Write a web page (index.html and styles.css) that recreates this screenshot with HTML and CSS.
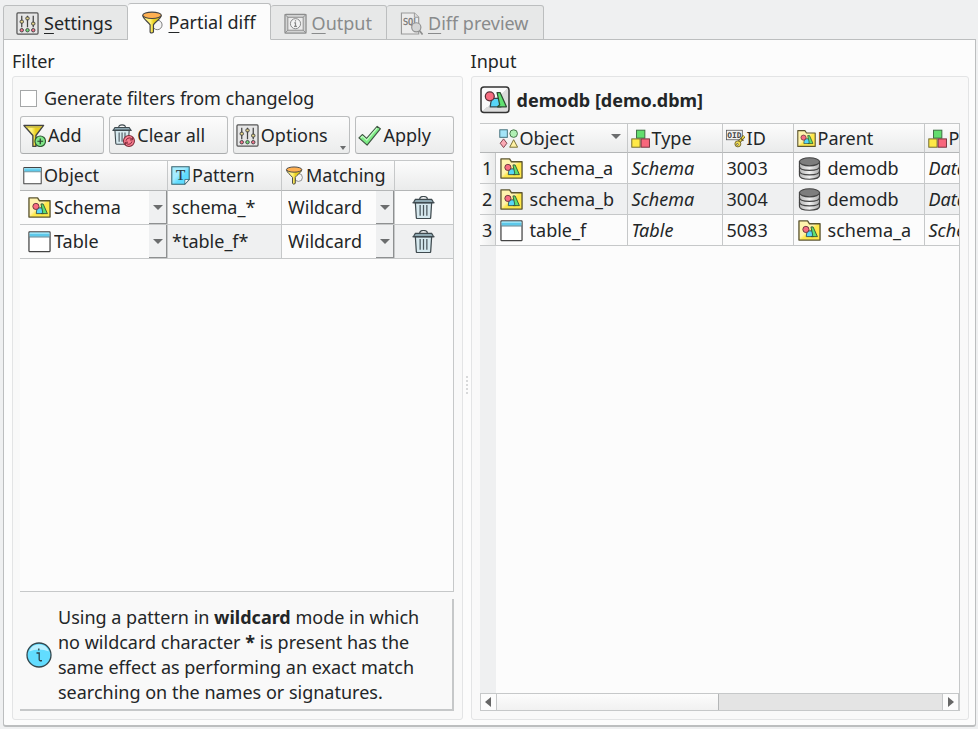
FILE: index.html
```html
<!DOCTYPE html>
<html lang="en">
<head>
    <meta charset="UTF-8">
    <meta name="viewport" content="width=device-width, initial-scale=1.0">
    <title>Partial diff</title>
    <link rel="stylesheet" href="styles.css">
</head>
<body>
    <!-- Icon set -->
    <svg class="icon-defs" width="0" height="0" aria-hidden="true">
        <defs>
            <linearGradient id="g-folder" x1="0" y1="0" x2="1" y2="1">
                <stop offset="0.45" stop-color="#fff3ad"/>
                <stop offset="0.55" stop-color="#ffe84a"/>
            </linearGradient>
            <linearGradient id="g-funnel" x1="0" x2="1">
                <stop offset="0.4" stop-color="#fff27a"/>
                <stop offset="0.6" stop-color="#e9cf1e"/>
            </linearGradient>
            <linearGradient id="g-disk" x1="0" x2="1">
                <stop offset="0" stop-color="#b5b5b5"/>
                <stop offset="0.5" stop-color="#f2f2f2"/>
                <stop offset="1" stop-color="#a8a8a8"/>
            </linearGradient>
            <linearGradient id="g-text" x1="0" y1="0" x2="1" y2="1">
                <stop offset="0.4" stop-color="#a5ecff"/>
                <stop offset="0.6" stop-color="#5fdcff"/>
            </linearGradient>
            <linearGradient id="g-model" x1="0" y1="0" x2="1" y2="1">
                <stop offset="0.5" stop-color="#fafafa"/>
                <stop offset="0.5" stop-color="#dcdcdc"/>
            </linearGradient>
        </defs>
        <symbol id="i-settings" viewBox="0 0 24 24">
            <rect x="1" y="1" width="22" height="22" rx="1" fill="#e6e6e6" stroke="#555" stroke-width="1.3"/>
            <path d="M6 4v12M12 4v12M18 4v12" stroke="#444" stroke-width="1.3"/>
            <g fill="#e9d98a" stroke="#444" stroke-width="1">
                <rect x="4.3" y="8.6" width="3.4" height="3" rx="1"/>
                <rect x="10.3" y="5.2" width="3.4" height="3" rx="1"/>
                <rect x="16.3" y="10.6" width="3.4" height="3" rx="1"/>
            </g>
            <g stroke="#444" stroke-width="1">
                <circle cx="6" cy="19" r="1.8" fill="#f2738c"/>
                <circle cx="12" cy="19" r="1.8" fill="#6fdc7a"/>
                <circle cx="18" cy="19" r="1.8" fill="#f2738c"/>
            </g>
        </symbol>
        <symbol id="i-filter" viewBox="0 0 24 24">
            <circle cx="17" cy="14.5" r="5" fill="#f4f4f4" stroke="#777" stroke-width="1"/>
            <path d="M2 5c0 3 5 6 7.5 9.500V22q1.500 2 3.500 0v-7.500C15 11 21 8 21 5z" fill="url(#g-funnel)" stroke="#444" stroke-width="1.2"/>
            <ellipse cx="11.5" cy="4.5" rx="9.7" ry="3.3" fill="#ffb052" stroke="#444" stroke-width="1.2"/>
        </symbol>
        <symbol id="i-output" viewBox="0 0 24 24">
            <rect x="1" y="2.5" width="22" height="19.5" rx="1" fill="#d2d3d3" stroke="#8c8d8d" stroke-width="1.3"/>
            <rect x="4" y="5.5" width="16" height="13.5" fill="#ececec" stroke="#8c8d8d"/>
            <path d="M1 2.5l3 3M23 2.5l-3 3M1 22l3-3M23 22l-3-3" stroke="#8c8d8d"/>
            <circle cx="12" cy="12.2" r="5.3" fill="#f3f3f3" stroke="#858686"/>
            <path d="M12 8.5v1.500M10.700 11.300H12v3.700M10.500 15h3" fill="none" stroke="#858686" stroke-width="1.2"/>
        </symbol>
        <symbol id="i-preview" viewBox="0 0 24 24">
            <path d="M1.500 1H15l4.500 4.500V23h-18z" fill="#ececec" stroke="#999" stroke-width="1.2"/>
            <path d="M15 1v4.500h4.500" fill="#ddd" stroke="#999"/>
            <text x="3" y="14" font-family="DejaVu Sans Mono" font-size="9" fill="#777" stroke="#777" stroke-width="0.3">SQL</text>
            <circle cx="17" cy="16" r="4.8" fill="#d5d6d6" stroke="#8f9090" stroke-width="1.2"/>
            <path d="M20.500 19.500l3 4" stroke="#8f9090" stroke-width="1.8"/>
        </symbol>
        <symbol id="i-add" viewBox="0 0 24 24">
            <path d="M1 1.500h20.500L13.500 12v11.500h-3.200V12z" fill="url(#g-funnel)" stroke="#444" stroke-width="1.4" stroke-linejoin="round"/>
            <path d="M2.500 2h17.500l-1.500 2H4z" fill="#c9bb45"/>
            <circle cx="18" cy="18" r="5.5" fill="#7fe687" stroke="#2e5a33" stroke-width="1.2"/>
            <path d="M18 15v6M15 18h6" stroke="#2b3d2c" stroke-width="1.3"/>
        </symbol>
        <symbol id="i-trash" viewBox="0 0 24 24">
            <path d="M3.500 7h17l-1 15.500q0 1-1 1h-13q-1 0-1-1z" fill="#d6e9ef" stroke="#3f4a4f" stroke-width="1.3"/>
            <path d="M8.500 9.500v11M12 9.500v11M15.500 9.500v11" stroke="#4a565b" stroke-width="1.3"/>
            <path d="M8 3.500q0-3 4-3t4 3" fill="none" stroke="#3f4a4f" stroke-width="1.3"/>
            <path d="M3.500 3.500h17l1.500 2.500v1H2V6z" fill="#8fa9b3" stroke="#3f4a4f" stroke-width="1.2"/>
            <path d="M0.500 7h23" stroke="#3f4a4f" stroke-width="1.3"/>
        </symbol>
        <symbol id="i-clear" viewBox="0 0 24 24">
            <use href="#i-trash" width="21" height="22"/>
            <circle cx="17.700" cy="17.700" r="5.700" fill="#fa7d90" stroke="#7c2a38" stroke-width="1.1"/>
            <path d="M14.500 17.500q1-3 3.500-3 2 0 3 1.500M20.900 18.200q-1 3-3.400 3-2 0-3-1.700" fill="none" stroke="#7a2836" stroke-width="1"/>
            <path d="M21.500 13.800v2.800h-2.800M14 21.800V19h2.700" fill="none" stroke="#7a2836"/>
        </symbol>
        <symbol id="i-apply" viewBox="0 0 24 24">
            <path d="M1 14.500l3.500-3.500 4.500 4L20 2.500 23.300 5 9.500 22z" fill="#7cec84" stroke="#3d5540" stroke-width="1.2" stroke-linejoin="round"/>
            <path d="M3 14.300l1.700-1.500 4.400 4L20 4.200" fill="none" stroke="#c2f7c4" stroke-width="1.3"/>
        </symbol>
        <symbol id="i-table" viewBox="0 0 24 24">
            <rect x="1" y="2" width="22" height="20.5" rx="0.5" fill="#fff" stroke="#444" stroke-width="1.3"/>
            <rect x="1.700" y="2.700" width="20.6" height="4.3" fill="#5cc9ea"/>
            <path d="M1.700 3.500h20.600" stroke="#a9e8fa"/>
            <path d="M1 7.300h22" stroke="#56808c"/>
        </symbol>
        <symbol id="i-text" viewBox="0 0 24 24">
            <path d="M1 1h22v16l-5.500 6H1z" fill="url(#g-text)" stroke="#36626e" stroke-width="1.3"/>
            <path d="M17.500 23v-6H23z" fill="#fff" stroke="#36626e"/>
            <text x="12" y="18" text-anchor="middle" font-family="Liberation Serif" font-size="19" fill="#2b3a40" stroke="#2b3a40" stroke-width="0.3">T</text>
        </symbol>
        <symbol id="i-shapes" viewBox="0 0 24 24">
            <path d="M9 10.500h8.500v8H7.500q0-3 1.500-8z" fill="#57d6f7" stroke="#2f4a52" stroke-width="1.2"/>
            <circle cx="7" cy="8.500" r="4.300" fill="#f76c80" stroke="#5b2e35" stroke-width="1.2"/>
            <path d="M14 5h3l6 13.500h-8.500l2-2z" fill="#5fe070" stroke="#2e4d33" stroke-width="1.2" stroke-linejoin="round"/>
        </symbol>
        <symbol id="i-schema" viewBox="0 0 24 24">
            <path d="M1 22V2h9l2 3h11v17z" fill="url(#g-folder)" stroke="#5c5530" stroke-width="1.4" stroke-linejoin="round"/>
            <use href="#i-shapes" x="3" y="4.500" width="18" height="18"/>
        </symbol>
        <symbol id="i-model" viewBox="0 0 30 28">
            <rect x="1" y="1" width="28" height="25.500" rx="3" fill="url(#g-model)" stroke="#333" stroke-width="1.5"/>
            <use href="#i-shapes" x="2.500" y="1.500" width="25" height="25"/>
        </symbol>
        <symbol id="i-objects" viewBox="0 0 24 24">
            <rect x="1" y="1" width="9.500" height="9.500" fill="#a4e4f7" stroke="#3f6c78" stroke-width="1.2"/>
            <circle cx="18.500" cy="5.800" r="4.800" fill="#b0f0b4" stroke="#3f7043" stroke-width="1.2"/>
            <path d="M5.800 12.500L10 18l-4.200 5.500L1.500 18z" fill="#fba9b4" stroke="#7c3f49" stroke-width="1.2"/>
            <path d="M18.500 13.500l5 9.500h-10z" fill="#fff1a4" stroke="#756b2f" stroke-width="1.2"/>
        </symbol>
        <symbol id="i-type" viewBox="0 0 24 24">
            <rect x="7" y="1.500" width="10.500" height="10" fill="#63dd6e" stroke="#3a6a3f" stroke-width="1.2"/>
            <rect x="1" y="12.500" width="10.500" height="10.500" fill="#ffe947" stroke="#6f6628" stroke-width="1.2"/>
            <rect x="12.800" y="12.500" width="10.500" height="10.500" fill="#f8677c" stroke="#75303b" stroke-width="1.2"/>
        </symbol>
        <symbol id="i-oid" viewBox="0 0 24 24">
            <rect x="0.600" y="1.600" width="20" height="12" fill="#f2f2f2" stroke="#555"/>
            <text x="10.500" y="11.500" text-anchor="middle" font-family="DejaVu Sans Mono" font-weight="bold" font-size="10" fill="#444">OID</text>
            <path d="M16 17l7-8" stroke="#5c5322" stroke-width="4"/>
            <path d="M16 17l7-8" stroke="#ecd84c" stroke-width="2"/>
            <path d="M19 12l3 3" stroke="#5c5322" stroke-width="1.5"/>
            <circle cx="15" cy="18.800" r="3.800" fill="#f2dd52" stroke="#5c5322"/>
            <circle cx="14.300" cy="19.500" r="1.200" fill="#fff" stroke="#5c5322"/>
        </symbol>
        <symbol id="i-database" viewBox="0 0 24 24">
            <path d="M1.500 5v14c0 2.500 4.500 4.200 10.500 4.200s10.500-1.700 10.500-4.200V5z" fill="url(#g-disk)" stroke="#444" stroke-width="1.2"/>
            <path d="M1.500 10c0 2.500 4.500 4 10.500 4s10.500-1.500 10.500-4M1.500 14.700c0 2.500 4.500 4 10.500 4s10.500-1.500 10.500-4" fill="none" stroke="#444" stroke-width="1.3"/>
            <ellipse cx="12" cy="5" rx="10.500" ry="4.200" fill="#7d7d7d" stroke="#444" stroke-width="1.2"/>
        </symbol>
        <symbol id="i-info" viewBox="0 0 26 26">
            <circle cx="13" cy="13" r="12" fill="#62dcff" stroke="#33474e" stroke-width="1.3"/>
            <path d="M3 9.500a10.600 10.600 0 0 1 20 0q-10-4-20 0z" fill="#b9f0ff"/>
            <path d="M12.800 6.500v2M10.500 11h2.700v6.500q0 1.500 2.800 1.200" fill="none" stroke="#2b4048" stroke-width="1.3"/>
        </symbol>
    </svg>

    <div class="tabs" role="tablist">
        <button class="tab" role="tab"><svg class="icon"><use href="#i-settings"/></svg><span><u>S</u>ettings</span></button>
        <button class="tab active" role="tab" aria-selected="true"><svg class="icon"><use href="#i-filter"/></svg><span><u>P</u>artial diff</span></button>
        <button class="tab" role="tab" disabled><svg class="icon"><use href="#i-output"/></svg><span><u>O</u>utput</span></button>
        <button class="tab" role="tab" disabled><svg class="icon"><use href="#i-preview"/></svg><span><u>D</u>iff preview</span></button>
    </div>

    <main class="page">
        <section class="pane filter-pane">
            <h2>Filter</h2>
            <div class="group">
                <div class="check-row">
                    <input type="checkbox" id="from-changelog">
                    <label for="from-changelog">Generate filters from changelog</label>
                </div>
                <div class="toolbar">
                    <button class="btn"><svg class="icon"><use href="#i-add"/></svg>Add</button>
                    <button class="btn"><svg class="icon"><use href="#i-clear"/></svg>Clear all</button>
                    <button class="btn btn-menu"><svg class="icon"><use href="#i-settings"/></svg>Options</button>
                    <button class="btn"><svg class="icon"><use href="#i-apply"/></svg>Apply</button>
                </div>

                <div class="table-box">
                    <table class="filters">
                        <colgroup><col class="c-object"><col class="c-pattern"><col class="c-matching"><col></colgroup>
                        <thead>
                            <tr>
                                <th><div class="cell"><svg class="icon-sm"><use href="#i-table"/></svg>Object</div></th>
                                <th><div class="cell"><svg class="icon-sm"><use href="#i-text"/></svg>Pattern</div></th>
                                <th><div class="cell"><svg class="icon-sm"><use href="#i-filter"/></svg>Matching</div></th>
                                <th></th>
                            </tr>
                        </thead>
                        <tbody>
                            <tr>
                                <td><div class="combo"><svg class="icon"><use href="#i-schema"/></svg><select aria-label="Object type"><option>Schema</option></select><span class="combo-arrow"></span></div></td>
                                <td class="pattern">schema_*</td>
                                <td><div class="combo"><select aria-label="Matching mode"><option>Wildcard</option></select><span class="combo-arrow"></span></div></td>
                                <td><button class="remove" aria-label="Remove filter"><svg class="icon"><use href="#i-trash"/></svg></button></td>
                            </tr>
                            <tr>
                                <td><div class="combo"><svg class="icon"><use href="#i-table"/></svg><select aria-label="Object type"><option>Table</option></select><span class="combo-arrow"></span></div></td>
                                <td class="pattern">*table_f*</td>
                                <td><div class="combo"><select aria-label="Matching mode"><option>Wildcard</option></select><span class="combo-arrow"></span></div></td>
                                <td><button class="remove" aria-label="Remove filter"><svg class="icon"><use href="#i-trash"/></svg></button></td>
                            </tr>
                        </tbody>
                    </table>
                </div>

                <div class="hint">
                    <svg class="icon-info"><use href="#i-info"/></svg>
                    <p>Using a pattern in <b>wildcard</b> mode in which no wildcard character <b>*</b> is present has the same effect as performing an exact match searching on the names or signatures.</p>
                </div>
            </div>
        </section>

        <div class="splitter"><i></i><i></i><i></i><i></i><i></i></div>

        <section class="pane input-pane">
            <h2>Input</h2>
            <div class="group">
                <div class="model"><svg class="icon-model"><use href="#i-model"/></svg>demodb [demo.dbm]</div>
                <div class="table-box">
                    <div class="viewport">
                        <table class="objects">
                            <colgroup><col class="c-row"><col class="c-name"><col class="c-type"><col class="c-id"><col class="c-parent"><col class="c-ptype"></colgroup>
                            <thead>
                                <tr>
                                    <th class="corner"></th>
                                    <th><div class="cell sorted"><svg class="icon-sm"><use href="#i-objects"/></svg>Object</div></th>
                                    <th><div class="cell"><svg class="icon-sm"><use href="#i-type"/></svg>Type</div></th>
                                    <th><div class="cell"><svg class="icon-sm"><use href="#i-oid"/></svg>ID</div></th>
                                    <th><div class="cell"><svg class="icon-sm"><use href="#i-schema"/></svg>Parent</div></th>
                                    <th><div class="cell"><svg class="icon-sm"><use href="#i-type"/></svg>Parent type</div></th>
                                </tr>
                            </thead>
                            <tbody>
                                <tr>
                                    <th>1</th>
                                    <td><div class="item"><svg class="icon"><use href="#i-schema"/></svg>schema_a</div></td>
                                    <td><em>Schema</em></td>
                                    <td>3003</td>
                                    <td><div class="item"><svg class="icon"><use href="#i-database"/></svg>demodb</div></td>
                                    <td><em>Database</em></td>
                                </tr>
                                <tr>
                                    <th>2</th>
                                    <td><div class="item"><svg class="icon"><use href="#i-schema"/></svg>schema_b</div></td>
                                    <td><em>Schema</em></td>
                                    <td>3004</td>
                                    <td><div class="item"><svg class="icon"><use href="#i-database"/></svg>demodb</div></td>
                                    <td><em>Database</em></td>
                                </tr>
                                <tr>
                                    <th>3</th>
                                    <td><div class="item"><svg class="icon"><use href="#i-table"/></svg>table_f</div></td>
                                    <td><em>Table</em></td>
                                    <td>5083</td>
                                    <td><div class="item"><svg class="icon"><use href="#i-schema"/></svg>schema_a</div></td>
                                    <td><em>Schema</em></td>
                                </tr>
                            </tbody>
                        </table>
                        <div class="row-gutter"></div>
                    </div>
                    <div class="scrollbar">
                        <button class="scroll-btn" aria-label="Scroll left"><svg width="6" height="10" viewBox="0 0 6 10"><path d="M6 0v10L0 5z" fill="#666"/></svg></button>
                        <div class="scroll-track"><div class="scroll-thumb"></div></div>
                        <button class="scroll-btn" aria-label="Scroll right"><svg width="6" height="10" viewBox="0 0 6 10"><path d="M0 0v10l6-5z" fill="#666"/></svg></button>
                    </div>
                </div>
            </div>
        </section>
    </main>
</body>
</html>
```
FILE: styles.css
```css
* {
    box-sizing: border-box;
}

body {
    margin: 0;
    padding: 3px 2px 2px 3px;
    height: 100vh;
    display: flex;
    flex-direction: column;
    background-color: #eff0f1;
    color: #232627;
    font-family: "Noto Sans", sans-serif;
    font-size: 18px;
    line-height: 25px;
}

button,
select {
    font: inherit;
    color: inherit;
}

.icon-defs {
    position: absolute;
}

.icon {
    width: 23px;
    height: 23px;
    flex: none;
}

.icon-sm {
    width: 19px;
    height: 19px;
    flex: none;
}

/* Tabs */
.tabs {
    display: flex;
    align-items: flex-end;
    height: 37px;
    margin-bottom: -1px;
}

.tab {
    display: flex;
    align-items: center;
    gap: 5px;
    height: 35px;
    padding: 2px 14px 0 13px;
    border: 1px solid #bcbebf;
    border-left-width: 0;
    border-radius: 3px 3px 0 0;
    background-color: #e7e8e8;
    white-space: nowrap;
}

.tab:first-child {
    padding-left: 12px;
    border-left-width: 1px;
}

.tab.active {
    position: relative;
    height: 37px;
    border-bottom-color: #fcfcfc;
    background-color: #fcfcfc;
}

.tab:disabled {
    color: #898b8c;
}

.tab u {
    text-underline-offset: 3px;
}

/* Page */
.page {
    flex: 1;
    min-height: 0;
    display: flex;
    padding: 9px 6px 5px 8px;
    border: 1px solid #bcbebf;
    border-bottom-width: 2px;
    border-radius: 0 0 3px 3px;
    background-color: #fcfcfc;
}

.pane {
    display: flex;
    flex-direction: column;
    min-width: 0;
}

.filter-pane {
    flex: 451;
}

.input-pane {
    flex: 499;
}

h2 {
    margin: 0 0 2px;
    font-size: 18px;
    font-weight: normal;
}

.group {
    flex: 1;
    min-height: 0;
    display: flex;
    flex-direction: column;
    padding: 8px;
    border: 1px solid #e3e4e5;
    border-radius: 3px;
    background-color: #f9f9f9;
}

.filter-pane .group {
    padding-left: 7px;
}

.splitter {
    width: 8px;
    display: flex;
    flex-direction: column;
    align-items: center;
    justify-content: center;
    gap: 2px;
}

.splitter i {
    width: 2px;
    height: 2px;
    background-color: #d8d9da;
}

/* Filter controls */
.check-row {
    display: flex;
    align-items: center;
    gap: 7px;
    margin: 1px 0 5px;
}

.check-row input {
    appearance: none;
    width: 17px;
    height: 17px;
    margin: 0;
    border: 1px solid #a5a7a8;
    background-color: #fff;
}

.toolbar {
    display: flex;
    gap: 5px;
    margin-bottom: 6px;
}

.btn {
    flex: 1 0 auto;
    display: flex;
    align-items: center;
    gap: 2px;
    height: 38px;
    padding: 0 2px;
    border: 1px solid #bcbebf;
    border-bottom-color: #aaacad;
    border-radius: 3px;
    background: linear-gradient(#fcfcfc, #ebecec);
}

.btn-menu {
    position: relative;
}

.btn-menu::after,
.sorted::after,
.combo-arrow::after {
    content: "";
    border: 5px solid transparent;
    border-top-color: #6b6d6e;
    border-bottom-width: 0;
}

.btn-menu::after {
    position: absolute;
    right: 3px;
    bottom: 3px;
    border-width: 4px 3px 0;
}

/* Tables */
.table-box {
    flex: 1;
    min-height: 0;
    display: flex;
    flex-direction: column;
    border: 1px solid #c6c8c9;
    border-left: 0;
    background-color: #fcfcfc;
}

table {
    table-layout: fixed;
    width: 100%;
    border-collapse: separate;
    border-spacing: 0;
}

th,
td {
    padding: 0;
    border-right: 1px solid #c6c8c9;
    border-bottom: 1px solid #c6c8c9;
    font-weight: normal;
    text-align: left;
    white-space: nowrap;
}

thead th {
    height: 29px;
    border-bottom-color: #b4b6b7;
    background: linear-gradient(#fcfcfc, #eaebeb);
}

tbody tr:nth-child(even) td {
    background-color: #eff0f1;
}

.cell {
    display: flex;
    align-items: center;
    gap: 2px;
    padding: 0 3px;
}

.sorted::after {
    margin: 0 3px 4px auto;
}

.filters thead th {
    height: 30px;
}

.filters th:last-child,
.filters td:last-child {
    border-right: 0;
}

.filters td {
    height: 34px;
}

.c-object {
    width: 148px;
}

.c-pattern {
    width: 114px;
}

.c-matching {
    width: 113px;
}

.filters .pattern {
    padding-left: 4px;
}

.combo {
    display: flex;
    align-items: center;
    height: 33px;
    padding-left: 6px;
    background-color: #fcfcfc;
}

.combo .icon {
    margin: 0 3px 0 2px;
}

.combo select {
    appearance: none;
    flex: 1;
    min-width: 0;
    padding: 0;
    border: 0;
    background: none;
}

.combo-arrow {
    width: 18px;
    height: 33px;
    display: flex;
    align-items: center;
    justify-content: center;
    border-right: 1px solid #8e9091;
    border-bottom: 1px solid #8e9091;
    background-color: #eff0f1;
}

.remove {
    display: flex;
    margin: 0 auto;
    padding: 0;
    border: 0;
    background: none;
}

/* Hint */
.hint {
    display: flex;
    align-items: center;
    gap: 6px;
    margin-top: 7px;
    padding: 6px 7px 4px 6px;
    border-right: 2px solid #c6c8c9;
    border-bottom: 2px solid #c6c8c9;
}

.hint p {
    margin: 0;
}

.icon-info {
    width: 26px;
    height: 26px;
    flex: none;
}

/* Input */
.model {
    display: flex;
    align-items: center;
    gap: 7px;
    margin: 1px 0 9px;
    font-weight: bold;
}

.icon-model {
    width: 30px;
    height: 28px;
}

.viewport {
    flex: 1;
    min-height: 0;
    display: flex;
    flex-direction: column;
    overflow: hidden;
}

.objects {
    width: 596px;
    flex: none;
}

.objects tbody th,
.objects tbody td {
    height: 31px;
}

.objects tbody th {
    background: linear-gradient(90deg, #fcfcfc, #eaebeb);
    text-align: center;
}

.objects tbody td {
    padding-left: 4px;
}

.objects .corner {
    border-right: 0;
}

.c-row {
    width: 16px;
}

.c-name {
    width: 132px;
}

.c-type {
    width: 95px;
}

.c-id {
    width: 71px;
}

.c-parent {
    width: 131px;
}

.item {
    display: flex;
    align-items: center;
    gap: 7px;
}

.row-gutter {
    flex: 1;
    width: 16px;
    background-color: #eff0f1;
}

.scrollbar {
    display: flex;
    height: 17px;
    border-top: 1px solid #c6c8c9;
}

.scroll-btn {
    display: flex;
    align-items: center;
    justify-content: center;
    width: 17px;
    padding: 0;
    border: 1px solid #c6c8c9;
    border-width: 0 1px;
    background-color: #fcfcfc;
}

.scroll-track {
    flex: 1;
    background-color: #e4e4e4;
}

.scroll-thumb {
    width: 50%;
    height: 100%;
    border-right: 1px solid #b4b6b7;
    background: linear-gradient(#fcfcfc, #f1f1f1);
}
```
